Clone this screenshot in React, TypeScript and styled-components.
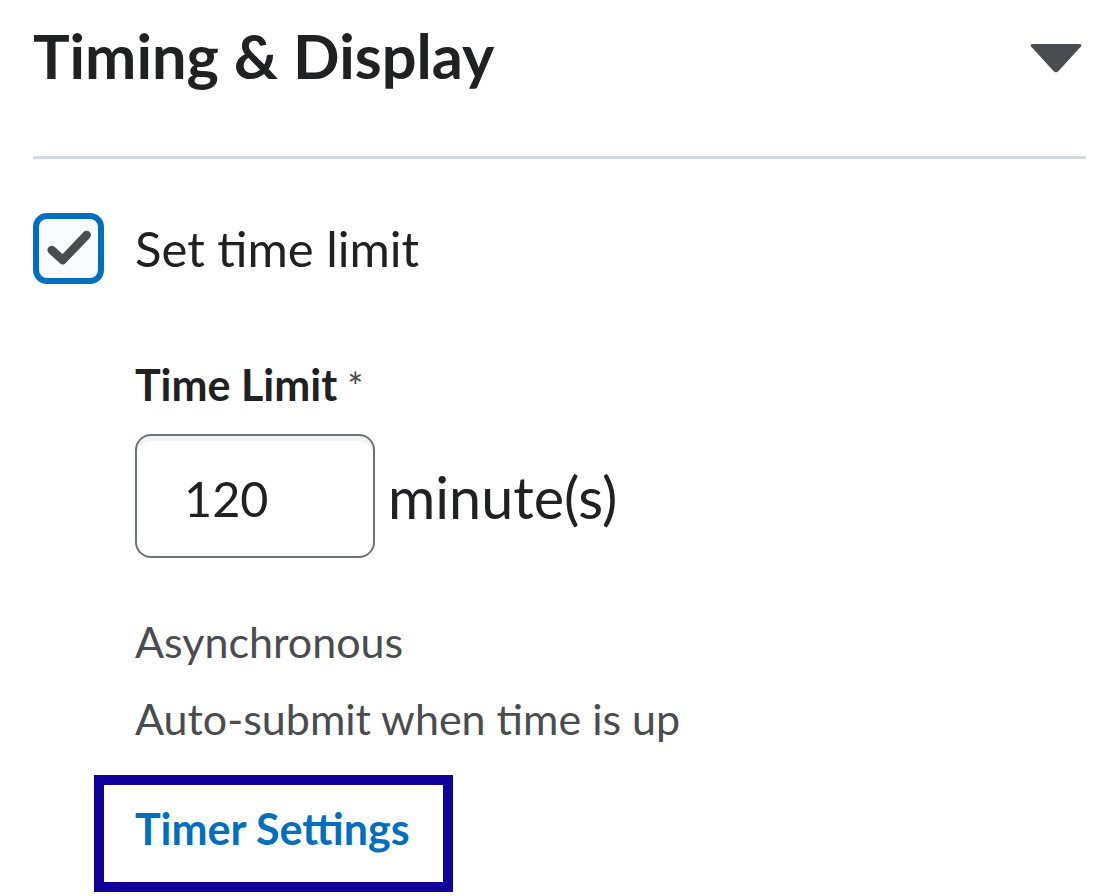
import * as React from 'react';
import styled, { createGlobalStyle } from 'styled-components';

const GlobalStyle = createGlobalStyle`
    html, body {
        margin: 0;
        padding: 0;
        background: #ffffff;
    }
    body {
        font-family: Lato, 'Noto Sans', sans-serif;
        color: #202122;
    }
`;

const Page = styled.div`
    padding: 0 26px 0 33px;
`;

const Header = styled.div`
    display: flex;
    justify-content: space-between;
    align-items: center;
    padding: 19px 0 63px;
    border-bottom: 3px solid #d3d9e3;
`;

const Title = styled.h2`
    margin: 0;
    font-size: 61.3px;
    line-height: 1.2;
    font-weight: 700;
    color: #202122;
`;

const Caret = styled.svg`
    width: 54px;
    height: 29px;
    margin: 6px 3px 0 0;
    fill: #494c50;
`;

const CheckRow = styled.label`
    display: flex;
    align-items: center;
    gap: 31px;
    margin-top: 54px;
    cursor: pointer;
`;

const Checkbox = styled.span<{ checked: boolean }>`
    display: flex;
    box-sizing: border-box;
    width: 71px;
    height: 71px;
    border: 6px solid #006fbf;
    border-radius: 14px;
    background: #f9fbff;
    svg {
        width: 59px;
        height: 59px;
        visibility: ${(p) => (p.checked ? 'visible' : 'hidden')};
    }
`;

const CheckText = styled.span`
    font-size: 49px;
    line-height: 1.2;
    color: #202122;
`;

const Nested = styled.div`
    padding-left: 102px;
`;

const FieldLabel = styled.div`
    height: 52px;
    margin-top: 75px;
    font-size: 43px;
    line-height: 1.2;
    font-weight: 700;
    color: #202122;
`;

const Required = styled.span`
    margin-left: 10px;
    font-size: 38px;
    font-weight: 400;
    line-height: 1;
    color: #494c50;
`;

const InputRow = styled.div`
    display: flex;
    align-items: center;
    margin-top: 23px;
`;

const NumberInput = styled.input`
    box-sizing: border-box;
    width: 240px;
    height: 124px;
    padding: 4px 0 0 47px;
    border: 2.5px solid #6e7376;
    border-radius: 16px;
    box-shadow: inset 0 5px 0 0 rgba(185, 194, 208, 0.2);
    background: #ffffff;
    font-family: Lato, 'Noto Sans', sans-serif;
    font-size: 48.5px;
    color: #202122;
    outline: none;
`;

const Unit = styled.span`
    margin-left: 13px;
    padding-top: 2px;
    font-size: 57.5px;
    line-height: 1.2;
    color: #202122;
`;

const Summary = styled.div<{ first?: boolean }>`
    margin-top: ${(p) => (p.first ? '58px' : '26px')};
    font-size: 43px;
    line-height: 1.2;
    color: #494c50;
`;

const FocusRing = styled.div`
    display: inline-block;
    margin: 30px 0 0 -41px;
    padding: 18px 33px 28px 31px;
    border: 10px solid #12009b;
`;

const TextLink = styled.a`
    display: block;
    font-size: 43px;
    line-height: 1.2;
    font-weight: 700;
    color: #006fbf;
    text-decoration: none;
`;

function App() {
    const [checked, setChecked] = React.useState(true);
    const [minutes, setMinutes] = React.useState('120');
    return (
        <Page>
            <GlobalStyle />
            <Header>
                <Title>Timing &amp; Display</Title>
                <Caret viewBox="0 0 54 29">
                    <path d="M4 0 H50 Q54 0 51.5 3 L29.5 27 Q27 29.5 24.5 27 L2.5 3 Q0 0 4 0 Z" />
                </Caret>
            </Header>
            <CheckRow onClick={() => setChecked((prev) => !prev)}>
                <Checkbox checked={checked}>
                    <svg viewBox="0 0 59 59">
                        <path d="M12.7 31 L23.7 41 L47.7 16" fill="none" stroke="#494c50" strokeWidth="8.5" strokeLinecap="round" strokeLinejoin="round" />
                    </svg>
                </Checkbox>
                <CheckText>Set time limit</CheckText>
            </CheckRow>
            <Nested>
                <FieldLabel>
                    Time Limit<Required>*</Required>
                </FieldLabel>
                <InputRow>
                    <NumberInput value={minutes} onChange={(e) => setMinutes(e.target.value)} />
                    <Unit>minute(s)</Unit>
                </InputRow>
                <Summary first>Asynchronous</Summary>
                <Summary>Auto-submit when time is up</Summary>
                <FocusRing>
                    <TextLink href="#">Timer Settings</TextLink>
                </FocusRing>
            </Nested>
        </Page>
    );
}

export default App;
